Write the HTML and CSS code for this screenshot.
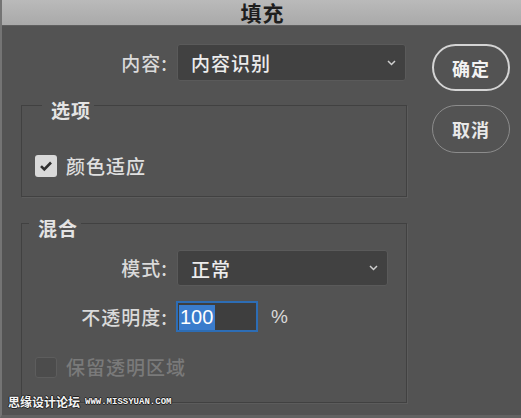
FILE: index.html
```html
<!DOCTYPE html>
<html lang="zh">
<head>
<meta charset="utf-8">
<title>填充</title>
<link rel="stylesheet" href="styles.css">
</head>
<body>
<div class="window">
  <div class="titlebar">填充</div>
  <div class="content">
    <div class="main">
      <div class="form-row top-row">
        <span class="label">内容:</span>
        <div class="select select-wide"><span>内容识别</span>
          <svg class="chev" width="9" height="6" viewBox="0 0 9 6"><path d="M1 1l3.5 3.5L8 1" fill="none" stroke="#cfcfcf" stroke-width="1.5"/></svg>
        </div>
      </div>
      <fieldset class="group group-options">
        <legend>选项</legend>
        <label class="check"><span class="box checked"><svg width="14" height="12" viewBox="0 0 14 12"><path d="M2 6.2l3.3 3.3L12 2.5" fill="none" stroke="#2e2e2e" stroke-width="2.6"/></svg></span><span>颜色适应</span></label>
      </fieldset>
      <fieldset class="group group-blend">
        <legend>混合</legend>
        <div class="form-row mode-row">
          <span class="label">模式:</span>
          <div class="select select-mode"><span>正常</span>
            <svg class="chev" width="9" height="6" viewBox="0 0 9 6"><path d="M1 1l3.5 3.5L8 1" fill="none" stroke="#cfcfcf" stroke-width="1.5"/></svg>
          </div>
        </div>
        <div class="form-row opacity-row">
          <span class="label">不透明度:</span>
          <div class="num"><span class="sel">100</span></div>
          <span class="pct">%</span>
        </div>
        <label class="check disabled"><span class="box"></span><span>保留透明区域</span></label>
      </fieldset>
    </div>
    <div class="buttons">
      <button class="btn primary">确定</button>
      <button class="btn">取消</button>
    </div>
  </div>
  <div class="watermark"><span class="wm-cn">思缘设计论坛</span><span class="wm-url">WWW.MISSYUAN.COM</span></div>
</div>
</body>
</html>
```
FILE: styles.css
```css
* { box-sizing: border-box; }
html, body { margin: 0; padding: 0; background: #535353; }
body { font-family: "Noto Sans CJK SC", "Noto Sans", sans-serif; }

.window {
  position: relative;
  width: 521px;
  height: 418px;
  background: #535353;
  border-left: 2px solid #747474;
  border-bottom: 3px solid #626262;
  overflow: hidden;
}

.titlebar {
  height: 26px;
  background: linear-gradient(#bababa, #a9a9a9);
  border-bottom: 1px solid #5f5f5f;
  text-align: center;
  font-size: 21px;
  font-weight: bold;
  line-height: 24px;
  color: #1e1e1e;
  letter-spacing: 1px;
  padding-left: 2px;
}

.content {
  display: flex;
  padding-top: 18px;
}

.main {
  margin-left: 19px;
  width: 386px;
}

.form-row {
  display: flex;
  align-items: center;
}

.label {
  width: 147px;
  text-align: right;
  font-size: 19px;
  font-weight: 500;
  letter-spacing: 1px;
  color: #dadada;
  margin-right: 9px;
  line-height: 24px;
}

.select {
  display: flex;
  align-items: center;
  justify-content: space-between;
  height: 37px;
  background: #414141;
  border: 1px solid #5a5a5a;
  border-radius: 3px;
  padding: 0 9px 0 13px;
  font-size: 19px;
  font-weight: 500;
  letter-spacing: 1px;
  color: #ececec;
}
.select-wide { width: 229px; }
.select-mode { width: 211px; height: 36px; }
.chev { display: block; }

.group {
  margin: 0;
  padding: 0 0 0 13px;
  border: 1px solid #414141;
  box-shadow: 1px 1px 0 #5c5c5c;
  width: 386px;
  min-width: 0;
}
.group legend {
  margin-left: 7px;
  padding: 10px 3px 0 9px;
  font-size: 19px;
  font-weight: bold;
  line-height: 20px;
  letter-spacing: 1px;
  color: #e4e4e4;
}
.group-options {
  margin-top: 9px;
  padding-bottom: 18px;
}
.group-options .check { margin-top: 34px; }

.group-blend {
  margin-top: 11px;
  padding-left: 0;
  padding-bottom: 23px;
}
.group-blend .label { width: 146px; }
.mode-row { margin-top: 12px; }
.opacity-row { margin-top: 15px; }
.opacity-row .label { margin-right: 8px; }

.num {
  width: 82px;
  height: 31px;
  background: #3e3e3e;
  border: 2px solid #2d6db5;
  padding: 1px 0 0 1px;
  display: flex;
  align-items: center;
}
.sel {
  background: #3a7ccc;
  color: #ffffff;
  font-family: "Liberation Sans", Arial, sans-serif;
  font-size: 20px;
  line-height: 25px;
  padding: 0 2px 0 1px;
}
.pct {
  margin-left: 13px;
  font-family: "Liberation Sans", Arial, sans-serif;
  font-size: 19px;
  color: #dadada;
}

.check {
  display: flex;
  align-items: center;
  font-size: 19px;
  font-weight: 500;
  letter-spacing: 1px;
  color: #e0e0e0;
  line-height: 24px;
}
.box {
  width: 22px;
  height: 22px;
  border-radius: 3px;
  margin-right: 9px;
  display: flex;
  align-items: center;
  justify-content: center;
}
.box.checked { background: #d9d9d9; }
.check.disabled { margin-top: 23px; margin-left: 13px; color: #7a7a7a; }
.check.disabled .box { background: #4c4c4c; border: 1px solid #5d5d5d; height: 21px; }

.buttons {
  margin-left: 25px;
  width: 78px;
  display: flex;
  flex-direction: column;
  gap: 14px;
}
.btn {
  height: 47px;
  width: 78px;
  border-radius: 24px;
  background: transparent;
  border: 1.5px solid #8c8c8c;
  color: #e8e8e8;
  font-family: "Noto Sans CJK SC", sans-serif;
  font-size: 18px;
  font-weight: bold;
  letter-spacing: 1px;
  padding: 0;
}
.btn.primary { border: 2px solid #d4d4d4; color: #f2f2f2; }
.btn + .btn { height: 48px; }

.watermark {
  position: absolute;
  left: 6px;
  top: 394px;
  display: flex;
  align-items: center;
  gap: 5px;
  color: #f4f4f4;
  text-shadow: -1px 0 #222, 1px 0 #222, 0 -1px #222, 0 1px #222;
}
.wm-cn { font-size: 12px; line-height: 16px; font-weight: bold; }
.wm-url { font-family: "Liberation Mono", monospace; font-size: 9px; font-weight: bold; }
```
